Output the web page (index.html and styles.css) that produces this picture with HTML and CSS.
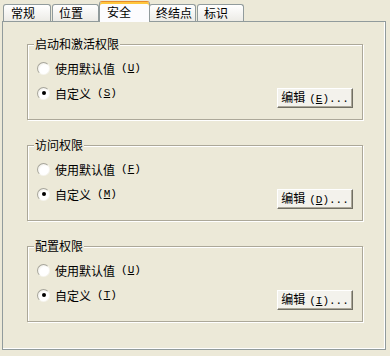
FILE: index.html
```html
<html>
<head>
<title>安全</title>
<link rel="stylesheet" href="styles.css">
</head>
<body>
<div class="tabs">
    <div class="tab tab-first">常规</div>
    <div class="tab">位置</div>
    <div class="tab tab-active">安全</div>
    <div class="tab">终结点</div>
    <div class="tab">标识</div>
</div>
<div class="panel">
    <fieldset class="group">
        <legend>启动和激活权限</legend>
        <div class="row"><span class="radio"></span>使用默认值<span class="key">(<u>U</u>)</span></div>
        <div class="row row-custom">
            <div class="option"><span class="radio checked"></span>自定义<span class="key">(<u>S</u>)</span></div>
            <button class="btn">编辑<span class="key">(<u>E</u>)...</span></button>
        </div>
    </fieldset>
    <fieldset class="group">
        <legend>访问权限</legend>
        <div class="row"><span class="radio"></span>使用默认值<span class="key">(<u>F</u>)</span></div>
        <div class="row row-custom">
            <div class="option"><span class="radio checked"></span>自定义<span class="key">(<u>M</u>)</span></div>
            <button class="btn">编辑<span class="key">(<u>D</u>)...</span></button>
        </div>
    </fieldset>
    <fieldset class="group group-last">
        <legend>配置权限</legend>
        <div class="row"><span class="radio"></span>使用默认值<span class="key">(<u>U</u>)</span></div>
        <div class="row row-custom">
            <div class="option"><span class="radio checked"></span>自定义<span class="key">(<u>T</u>)</span></div>
            <button class="btn">编辑<span class="key">(<u>I</u>)...</span></button>
        </div>
    </fieldset>
</div>
</body>
</html>
```

FILE: styles.css
```css
* {
    padding: 0;
    margin: 0;
    box-sizing: border-box;
}
body {
    width: 390px;
    height: 356px;
    overflow: hidden;
    background: #ece9d8;
    color: #000;
    font-family: "Noto Sans CJK SC", "DejaVu Sans", sans-serif;
    font-size: 12px;
}

/* tab strip */
.tabs {
    display: flex;
    align-items: flex-end;
    height: 21px;
    padding-left: 3px;
}
.tab {
    width: 47px;
    height: 17px;
    margin-right: 1px;
    padding-left: 6px;
    line-height: 16px;
    border: 1px solid #919b9c;
    border-bottom: 0;
    border-radius: 3px 3px 0 0;
    background: linear-gradient(#ffffff, #ecebe6);
}
.tab-first {
    width: 48px;
    padding-left: 7px;
}
.tab-active {
    position: relative;
    z-index: 1;
    width: 51px;
    height: 21px;
    margin: 0 -1px -1px -1px;
    padding: 2px 0 0 7px;
    line-height: 16px;
    border-top-color: #e68b2c;
    background: #fcfcfe;
    box-shadow: inset 0 2px #ffc73c;
}

/* page */
.panel {
    width: 384px;
    height: 329px;
    margin-left: 2px;
    padding: 15px 22px 0 24px;
    border: 1px solid #919b9c;
    box-shadow: inset -1px -1px #ffffff;
}
.group {
    margin-bottom: 18px;
    padding: 7px 9px 11px 9px;
    border: 1px solid #aca899;
    box-shadow: inset 1px 1px #ffffff, 1px 1px #ffffff;
}
.group + .group-last {
    margin-top: 5px;
}
.group legend {
    margin-left: -3px;
    padding: 0 1px;
    line-height: 14px;
    background: #ece9d8;
}
.row {
    display: flex;
    align-items: center;
    height: 20px;
}
.row + .row {
    margin-top: 5px;
}
.row-custom {
    height: 25px;
    align-items: flex-start;
}
.option {
    display: flex;
    align-items: center;
    height: 20px;
}
.key {
    margin-left: 6px;
    font-family: "Liberation Mono", "DejaVu Sans Mono", monospace;
    font-size: 11px;
}
.radio {
    display: flex;
    align-items: center;
    justify-content: center;
    width: 13px;
    height: 13px;
    margin-right: 5px;
    border-radius: 50%;
    border: 1px solid;
    border-color: #a7a69c #f6f5ef #f6f5ef #a7a69c;
    background: radial-gradient(circle at 65% 65%, #ffffff 50%, #e4e2d6);
}
.radio.checked::after {
    content: "";
    width: 4px;
    height: 4px;
    border-radius: 50%;
    background: #000;
}
.btn {
    width: 76px;
    height: 20px;
    margin: 5px 0 0 auto;
    font: inherit;
    color: #000;
    line-height: 16px;
    white-space: nowrap;
    background: #f3f2ec;
    border: 1px solid;
    border-color: #ffffff #716f64 #716f64 #ffffff;
    box-shadow: inset -1px -1px #aca899;
}
.btn .key {
    margin-left: 4px;
}
```
